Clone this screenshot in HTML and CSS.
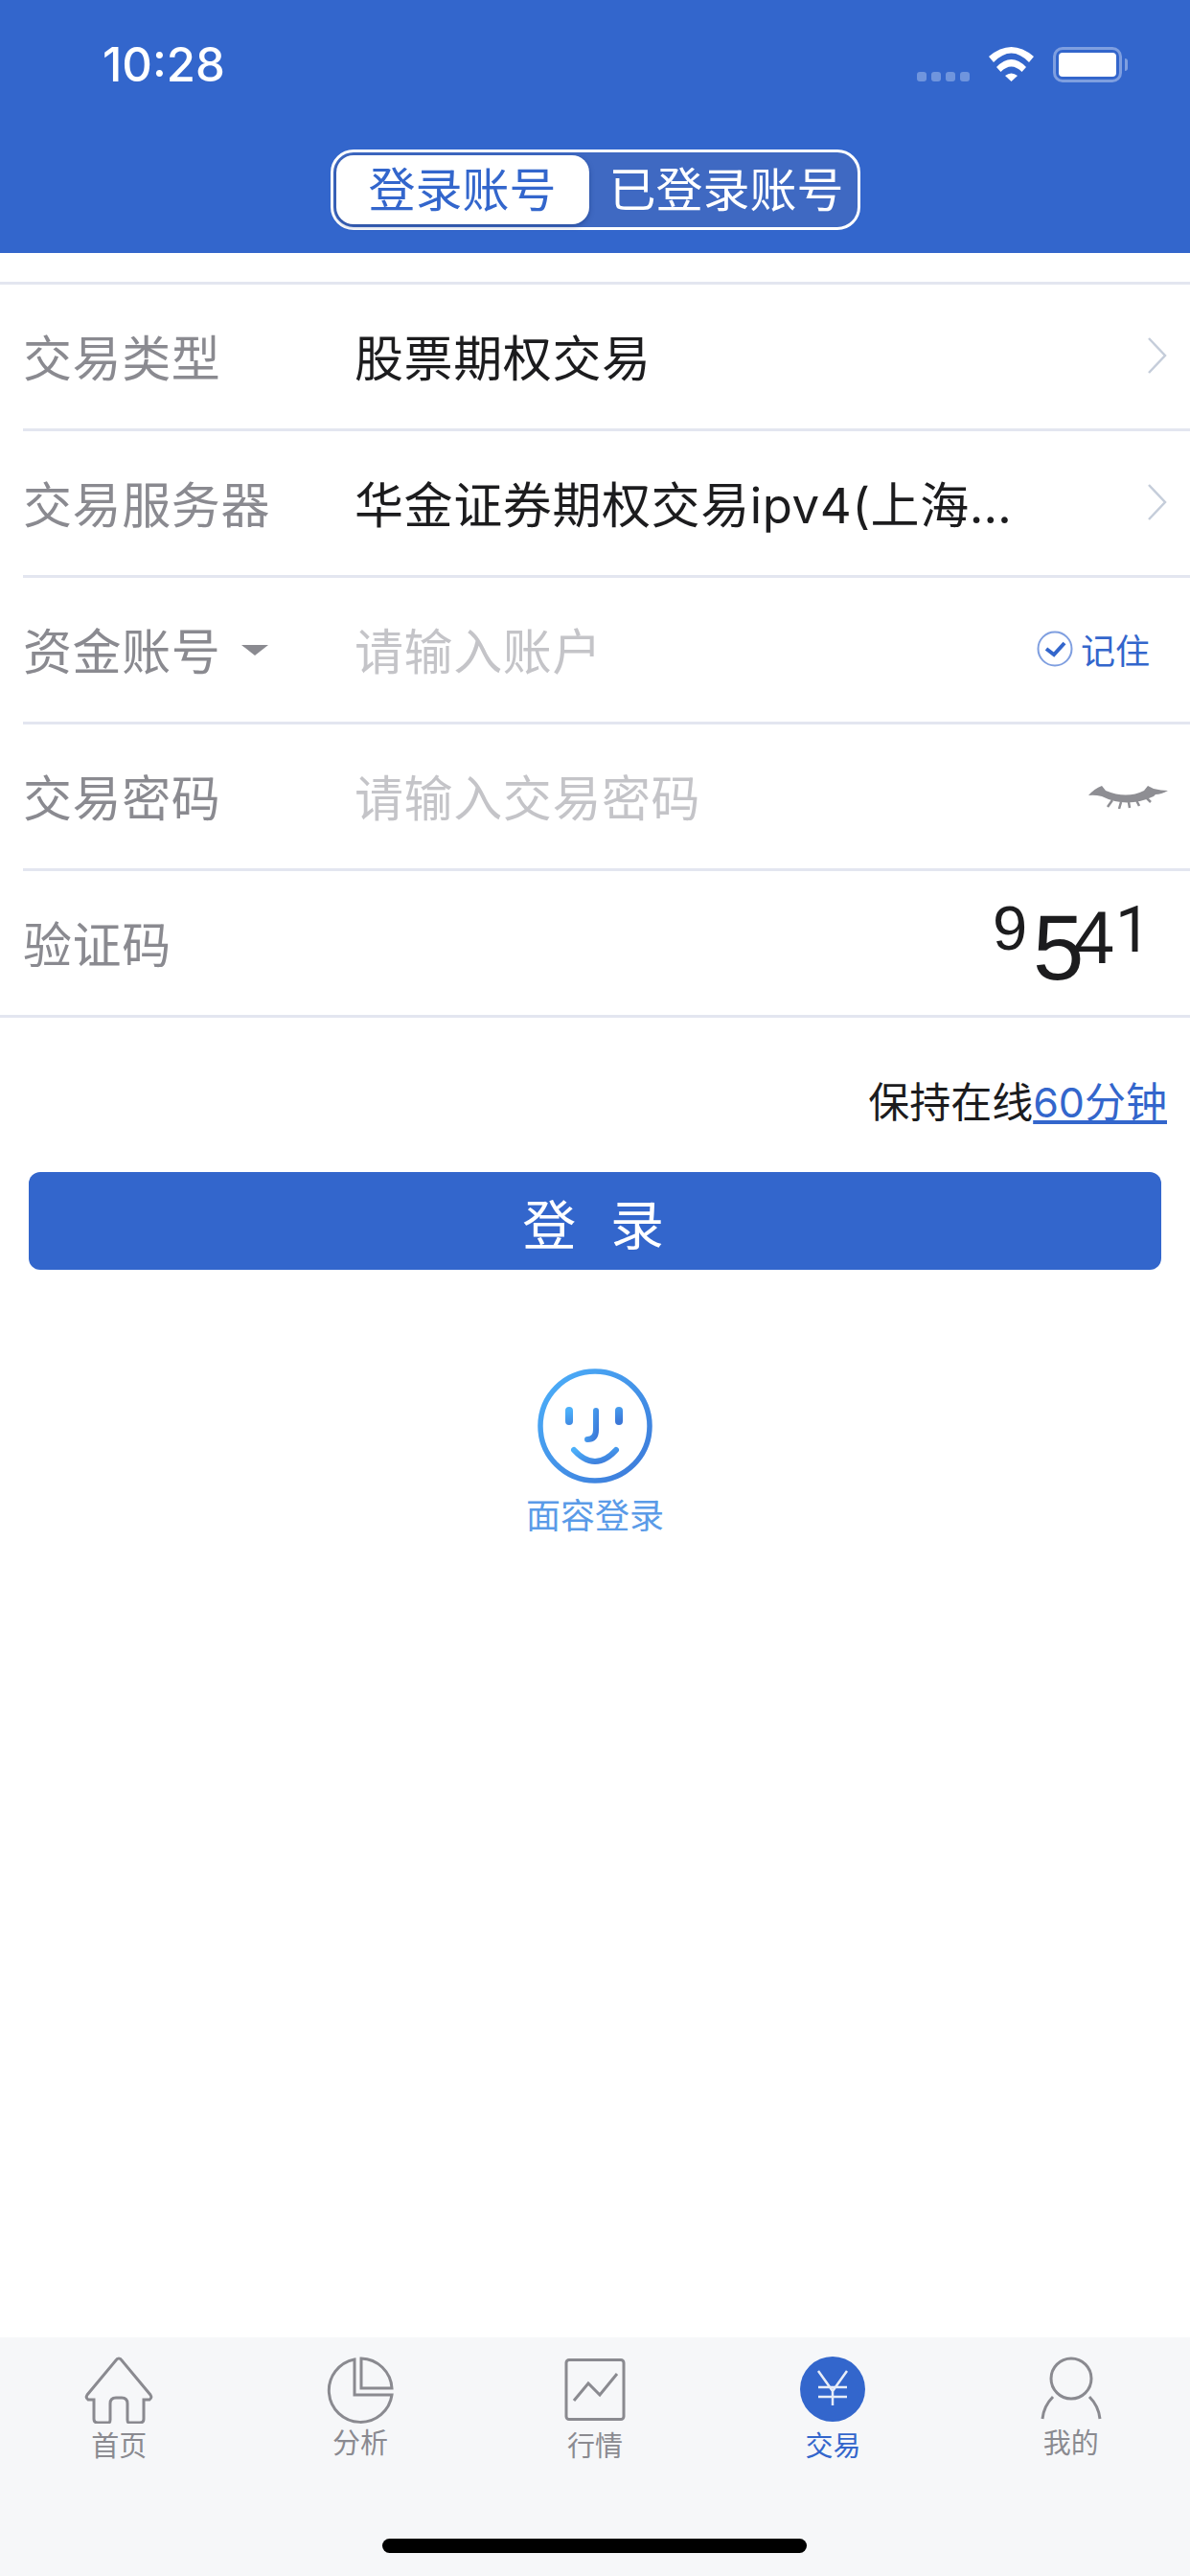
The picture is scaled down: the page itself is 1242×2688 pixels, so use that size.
FILE: index.html
```html
<!DOCTYPE html>
<html lang="zh-Hans">
<head>
<meta charset="UTF-8">
<title>登录账号</title>
<link rel="stylesheet" href="styles.css">
</head>
<body>
<div class="screen">

<header class="top">
    <div class="status">
        <span class="time">10:28</span>
        <div class="status-icons">
            <div class="signal"><i></i><i></i><i></i><i></i></div>
            <svg class="wifi" width="47" height="36" viewBox="0 0 47 36" fill="#fff">
                <path d="M0 10Q23.500-10 47 10L42 16Q23.500-3 5 16z"/>
                <path d="M8 21Q23.500 5 39 21L34.500 26Q23.500 15 12.500 26z"/>
                <path d="M17 30Q23.500 25 30 30L23.500 36z"/>
            </svg>
            <div class="battery"><div class="battery-fill"></div></div>
        </div>
    </div>
    <div class="segment">
        <button class="segment-item active">登录账号</button>
        <button class="segment-item">已登录账号</button>
    </div>
</header>

<main class="content">
    <div class="form">
        <div class="row">
            <span class="label">交易类型</span>
            <span class="value">股票期权交易</span>
            <svg class="chevron" width="20" height="38" viewBox="0 0 20 38"><path d="M1 1l17 18L1 37" fill="none" stroke="#c5cdda" stroke-width="2.500"/></svg>
        </div>
        <div class="row">
            <span class="label">交易服务器</span>
            <span class="value">华金证券期权交易ipv4(上海…</span>
            <svg class="chevron" width="20" height="38" viewBox="0 0 20 38"><path d="M1 1l17 18L1 37" fill="none" stroke="#c5cdda" stroke-width="2.500"/></svg>
        </div>
        <div class="row">
            <span class="label">资金账号<i class="caret"></i></span>
            <span class="value placeholder">请输入账户</span>
            <div class="remember">
                <svg width="38" height="38" viewBox="0 0 38 38"><circle cx="19" cy="19" r="17.500" fill="none" stroke="#7f9fe0" stroke-width="2"/><path d="M10 19l8 6 11-12" fill="none" stroke="#3366cc" stroke-width="4"/></svg>
                <span>记住</span>
            </div>
        </div>
        <div class="row">
            <span class="label">交易密码</span>
            <span class="value placeholder">请输入交易密码</span>
            <svg class="eye" width="83" height="24" viewBox="0 0 83 24">
                <path d="M0 10Q6 3 14 0L18 5Q40 14 58 5L62 0L68 3Q76 5 83 5Q76 9 70 9L68 11Q40 24 14 11Q6 9 0 10z" fill="#8e8e93"/>
                <path d="M25 15l-5 7M34 17l-2 7M42 17l1 6M50 15l3 6M60 12l5 5" fill="none" stroke="#8e8e93" stroke-width="2.500"/>
            </svg>
        </div>
        <div class="row row-last">
            <span class="label">验证码</span>
            <div class="captcha">
                <span class="digit d1">9</span>
                <span class="digit d2">5</span>
                <span class="digit d3">4</span>
                <span class="digit d4">1</span>
            </div>
        </div>
    </div>

    <p class="keep">保持在线<a href="#">60分钟</a></p>
    <button class="login">登 录</button>

    <div class="face">
        <svg width="120" height="120" viewBox="0 0 120 120">
            <defs>
                <linearGradient id="faceGrad" x1="0" y1="0" x2="1" y2="1">
                    <stop offset="0" stop-color="#4cb0fa"/>
                    <stop offset="1" stop-color="#3c78d8"/>
                </linearGradient>
            </defs>
            <g fill="none" stroke="url(#faceGrad)" stroke-linecap="round">
                <circle cx="60" cy="60" r="57" stroke-width="5.500"/>
                <path d="M33 44v11M85 44v11" stroke-width="8"/>
                <path d="M61 44v20q0 10-9 10" stroke-width="6"/>
                <path d="M38 85q22 24 44 0" stroke-width="6"/>
            </g>
        </svg>
        <span>面容登录</span>
    </div>
</main>

<nav class="tabs">
    <a class="tab">
        <svg width="72" height="70" viewBox="0 0 72 70"><path d="M36 2q2 0 3 2l30 36q2 3-1 5h-6v20q0 4-4 4H47q-2 0-2-3V49q0-6-6-6h-6q-6 0-6 6v17q0 3-2 3H14q-4 0-4-4V45H4q-3-2-1-5L33 4q1-2 3-2z" fill="none" stroke="#8a8a90" stroke-width="3"/></svg>
        <span>首页</span>
    </a>
    <a class="tab tab-raised tab-pie">
        <svg width="70" height="70" viewBox="0 0 70 70"><g fill="none" stroke="#8a8a90" stroke-width="3"><path d="M29 3A33 33 0 1 0 68 40H29z"/><path d="M36 2v31h32A33 33 0 0 0 36 2z"/></g></svg>
        <span>分析</span>
    </a>
    <a class="tab">
        <svg width="64" height="70" viewBox="0 0 64 70"><rect x="2" y="3.500" width="60" height="62" rx="3" fill="none" stroke="#8a8a90" stroke-width="3"/><path d="M10 46l15-18 12 12 18-22" fill="none" stroke="#8a8a90" stroke-width="3"/></svg>
        <span>行情</span>
    </a>
    <a class="tab active">
        <svg width="68" height="70" viewBox="0 0 68 70"><circle cx="34" cy="34" r="34" fill="#3366cc"/><path d="M19 15l15 21 15-21M34 36v15M19 32h30M19 42h30" fill="none" stroke="#e8edf8" stroke-width="2.500"/></svg>
        <span>交易</span>
    </a>
    <a class="tab tab-raised">
        <svg width="64" height="70" viewBox="0 0 64 70"><g fill="none" stroke="#8a8a90" stroke-width="3"><circle cx="32" cy="23" r="21"/><path d="M2 65C3 55 7 48 13 42M51 42C57 48 61 55 62 65"/></g></svg>
        <span>我的</span>
    </a>
    <div class="home-bar"></div>
</nav>

</div>
</body>
</html>
```

FILE: styles.css
```css
body {
    margin: 0;
    font-family: Inter, "Noto Sans CJK SC", sans-serif;
    background: #fff;
    color: #1c1c1e;
}
.screen {
    width: 1242px;
    height: 2688px;
    display: flex;
    flex-direction: column;
    overflow: hidden;
}

/* header */
.top {
    height: 264px;
    box-sizing: border-box;
    background: #3366cc;
    padding-top: 44px;
    color: #fff;
}
.status {
    display: flex;
    justify-content: space-between;
    align-items: flex-start;
    padding: 0 71px 0 107px;
    height: 112px;
}
.time {
    font-size: 49px;
    font-weight: 500;
    line-height: 48px;
}
.status-icons {
    display: flex;
    align-items: flex-start;
    margin-top: 5px;
}
.signal {
    display: flex;
    gap: 5px;
    margin-top: 26px;
    margin-right: 20px;
}
.signal i {
    width: 10px;
    height: 10px;
    border-radius: 3px;
    background: #7095dd;
}
.wifi {
    margin-right: 20px;
}
.battery {
    position: relative;
    width: 72px;
    height: 37px;
    box-sizing: border-box;
    border: 3px solid #7f9fe0;
    border-radius: 10px;
    padding: 3px;
}
.battery::after {
    content: "";
    position: absolute;
    top: 9px;
    right: -9px;
    width: 3px;
    height: 13px;
    border-radius: 0 7px 7px 0;
    background: #7f9fe0;
}
.battery-fill {
    height: 100%;
    background: #fff;
    border-radius: 4px;
}
.segment {
    width: 553px;
    height: 84px;
    box-sizing: border-box;
    margin: 0 auto;
    border: 3px solid #fff;
    border-radius: 24px;
    background: #3f69c2;
    display: flex;
    padding: 3px;
}
.segment-item {
    border: none;
    background: none;
    padding: 2px 0 0 10px;
    font: inherit;
    font-size: 49px;
    color: #fff;
    flex: 1;
    line-height: 70px;
    white-space: nowrap;
}
.segment-item.active {
    flex: 0 0 264px;
    padding-left: 0;
    background: #fff;
    color: #3366cc;
    border-radius: 18px;
    box-shadow: 0 2px 5px rgba(20, 50, 120, 0.5);
}

/* form */
.content {
    flex: 1;
    display: flex;
    flex-direction: column;
    padding-top: 30px;
}
.form {
    border-top: 3px solid #e3e6f0;
}
.row {
    display: flex;
    align-items: center;
    height: 147px;
    margin-left: 24px;
    padding: 0 24px 3px 0;
    border-bottom: 3px solid #e3e6f0;
    font-size: 51px;
    letter-spacing: 0.6px;
}
.row-last {
    margin-left: 0;
    padding-left: 24px;
}
.label {
    width: 346px;
    flex: none;
    color: #8a8a90;
    display: flex;
    align-items: center;
}
.caret {
    width: 0;
    height: 0;
    margin-left: 22px;
    margin-top: 4px;
    border-left: 14px solid transparent;
    border-right: 14px solid transparent;
    border-top: 11px solid #8a8a90;
}
.value {
    flex: 1;
    white-space: nowrap;
}
.placeholder {
    color: #c4c4c8;
}
.remember {
    display: flex;
    align-items: center;
    gap: 8px;
    font-size: 36px;
    letter-spacing: 0;
    color: #3366cc;
    margin-right: 18px;
}
.eye {
    margin: 5px -1px 0 0;
}
.captcha {
    margin-left: auto;
    margin-right: 31px;
    font-family: "Liberation Sans", sans-serif;
    letter-spacing: 0;
    height: 100%;
    position: relative;
    width: 150px;
}
/* captcha digits are scattered on purpose */
.digit {
    position: absolute;
    line-height: 1;
}
.d1 { left: -1px; top: 27px; font-size: 65px; }
.d2 { left: 41px; top: 32px; font-size: 96px; }
.d3 { left: 83px; top: 30px; font-size: 78px; }
.d4 { left: 127px; top: 29px; font-size: 66px; font-family: Roboto, sans-serif; }

.keep {
    margin: 64px 24px 0 0;
    text-align: right;
    font-size: 43px;
    line-height: 48px;
}
.keep a {
    color: #3366cc;
    text-decoration: underline;
}
.login {
    width: 1182px;
    height: 102px;
    flex: none;
    margin: 49px 0 0 30px;
    padding-left: 12px;
    border: none;
    border-radius: 12px;
    background: #3366cc;
    color: #fff;
    font: inherit;
    font-size: 56px;
    letter-spacing: 10px;
}
.face {
    margin-top: 103px;
    display: flex;
    flex-direction: column;
    align-items: center;
    gap: 14px;
    font-size: 36px;
    line-height: 40px;
    color: #5a9be8;
}

/* bottom tabs */
.tabs {
    position: relative;
    height: 249px;
    background: #f6f7f9;
    display: grid;
    grid-template-columns: repeat(5, 1fr);
}
.tab {
    display: flex;
    flex-direction: column;
    align-items: center;
    padding-top: 20px;
    color: #8a8a90;
    font-size: 29px;
}
.tab span {
    line-height: 30px;
    margin-top: 9px;
}
.tab-raised span {
    margin-top: 6px;
}
.tab-pie {
    margin-left: 7px;
}
.tab.active {
    color: #3366cc;
}
.home-bar {
    position: absolute;
    left: 399px;
    top: 210px;
    width: 443px;
    height: 15px;
    border-radius: 8px;
    background: #000;
}
```
